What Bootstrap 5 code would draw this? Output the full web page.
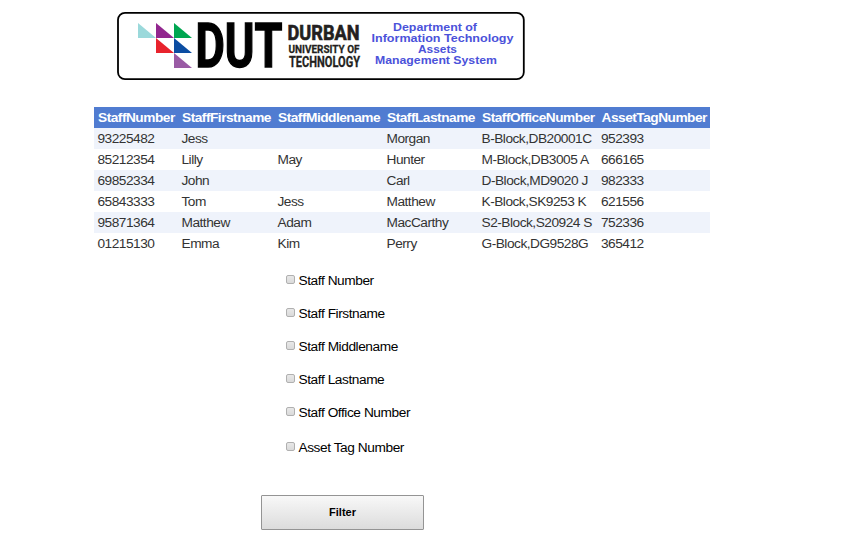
<!DOCTYPE html>
<html lang="en">
<head>
<meta charset="utf-8">
<meta name="viewport" content="width=device-width, initial-scale=1">
<title>DUT Assets Management System</title>
<link href="https://cdn.jsdelivr.net/npm/bootstrap@5.3.0/dist/css/bootstrap.min.css" rel="stylesheet">
<style>
body{font-family:"Liberation Sans",Arial,sans-serif;font-size:13.7px;letter-spacing:-.49px;line-height:15px;color:#000;background:#fff;height:540px;overflow:hidden}
.banner{margin:11px 0 0 116px;width:410px;height:70px;letter-spacing:0}
.staff-table{margin:26px 0 0 94px;width:616px;table-layout:fixed;color:#333}
.staff-table th,.staff-table td{padding:3px 0 3px 3.5px;height:21px;line-height:15px;white-space:nowrap}
.staff-table th{background:#507cd1;color:#fff;padding-left:4px}
.staff-table tbody tr:nth-child(odd){background:#eff3fb}
.filters{margin:19px 0 0 286px;gap:18px}
.filters label{height:15px;gap:3.5px;letter-spacing:-.43px}
.filters label:last-child{margin-top:2px}
.filters .form-check-input{width:9px;height:9px;margin:0 0 2px;position:static;border:1px solid #b0b0b0;border-radius:2px;background:linear-gradient(#e8e8e8,#dadada)}
.filter-btn{margin:40px 0 0 261px;width:163px;height:35px;font-size:11px;letter-spacing:0;font-weight:700;border:1px solid #949494;border-radius:1px;background:linear-gradient(#f8f8f8,#dcdcdc);color:#000;line-height:13px}
</style>
</head>
<body>
<header>
<svg class="banner d-block" viewBox="116 11 410 70" role="img" aria-label="Durban University of Technology">
  <rect x="118" y="12.8" width="405.8" height="66.4" rx="7" fill="#fff" stroke="#000" stroke-width="1.8"/>
  <path d="M138 23v15h18z" fill="#9bd9db"/>
  <path d="M156 23v15h18z" fill="#92278f"/>
  <path d="M174 23v15h18z" fill="#00a651"/>
  <path d="M156 38v15h18z" fill="#e8232d"/>
  <path d="M174 38v15h18z" fill="#0b4da2"/>
  <path d="M174 53v15h18z" fill="#9a5ba5"/>
  <g font-family="Roboto, sans-serif" font-weight="700">
    <text x="195.5" y="67" font-size="60.5" textLength="87" lengthAdjust="spacingAndGlyphs" stroke="#000" stroke-width="1.5">DUT</text>
    <g fill="#231f20" stroke="#231f20">
      <text x="287.5" y="40" font-size="19.5" textLength="72" lengthAdjust="spacingAndGlyphs" stroke-width=".6">DURBAN</text>
      <text x="288.5" y="53" font-size="11.8" textLength="71" lengthAdjust="spacingAndGlyphs" stroke-width=".3">UNIVERSITY OF</text>
      <text x="289" y="67" font-size="14.2" textLength="71" lengthAdjust="spacingAndGlyphs" stroke-width=".3">TECHNOLOGY</text>
    </g>
  </g>
  <g font-family="'Liberation Sans', Arial, sans-serif" font-weight="700" font-size="10" fill="#4b52da">
    <text x="393" y="31" textLength="84" lengthAdjust="spacingAndGlyphs">Department of</text>
    <text x="371.5" y="42" textLength="142" lengthAdjust="spacingAndGlyphs">Information Technology</text>
    <text x="418" y="53" textLength="39" lengthAdjust="spacingAndGlyphs">Assets</text>
    <text x="375" y="64.3" textLength="122" lengthAdjust="spacingAndGlyphs">Management System</text>
  </g>
</svg>
</header>
<main>
<table class="staff-table">
  <colgroup><col style="width:84px"><col style="width:96px"><col style="width:109px"><col style="width:95px"><col style="width:119.5px"><col style="width:112.5px"></colgroup>
  <thead><tr><th>StaffNumber</th><th>StaffFirstname</th><th>StaffMiddlename</th><th>StaffLastname</th><th>StaffOfficeNumber</th><th>AssetTagNumber</th></tr></thead>
  <tbody>
    <tr><td>93225482</td><td>Jess</td><td></td><td>Morgan</td><td>B-Block,DB20001C</td><td>952393</td></tr>
    <tr><td>85212354</td><td>Lilly</td><td>May</td><td>Hunter</td><td>M-Block,DB3005 A</td><td>666165</td></tr>
    <tr><td>69852334</td><td>John</td><td></td><td>Carl</td><td>D-Block,MD9020 J</td><td>982333</td></tr>
    <tr><td>65843333</td><td>Tom</td><td>Jess</td><td>Matthew</td><td>K-Block,SK9253 K</td><td>621556</td></tr>
    <tr><td>95871364</td><td>Matthew</td><td>Adam</td><td>MacCarthy</td><td>S2-Block,S20924 S</td><td>752336</td></tr>
    <tr><td>01215130</td><td>Emma</td><td>Kim</td><td>Perry</td><td>G-Block,DG9528G</td><td>365412</td></tr>
  </tbody>
</table>
<form>
  <div class="filters d-flex flex-column align-items-start">
    <label class="d-flex align-items-center"><input class="form-check-input" type="checkbox">Staff Number</label>
    <label class="d-flex align-items-center"><input class="form-check-input" type="checkbox">Staff Firstname</label>
    <label class="d-flex align-items-center"><input class="form-check-input" type="checkbox">Staff Middlename</label>
    <label class="d-flex align-items-center"><input class="form-check-input" type="checkbox">Staff Lastname</label>
    <label class="d-flex align-items-center"><input class="form-check-input" type="checkbox">Staff Office Number</label>
    <label class="d-flex align-items-center"><input class="form-check-input" type="checkbox">Asset Tag Number</label>
  </div>
  <button type="button" class="btn filter-btn d-block p-0">Filter</button>
</form>
</main>
<script src="https://cdn.jsdelivr.net/npm/bootstrap@5.3.0/dist/js/bootstrap.bundle.min.js"></script>
</body>
</html>
